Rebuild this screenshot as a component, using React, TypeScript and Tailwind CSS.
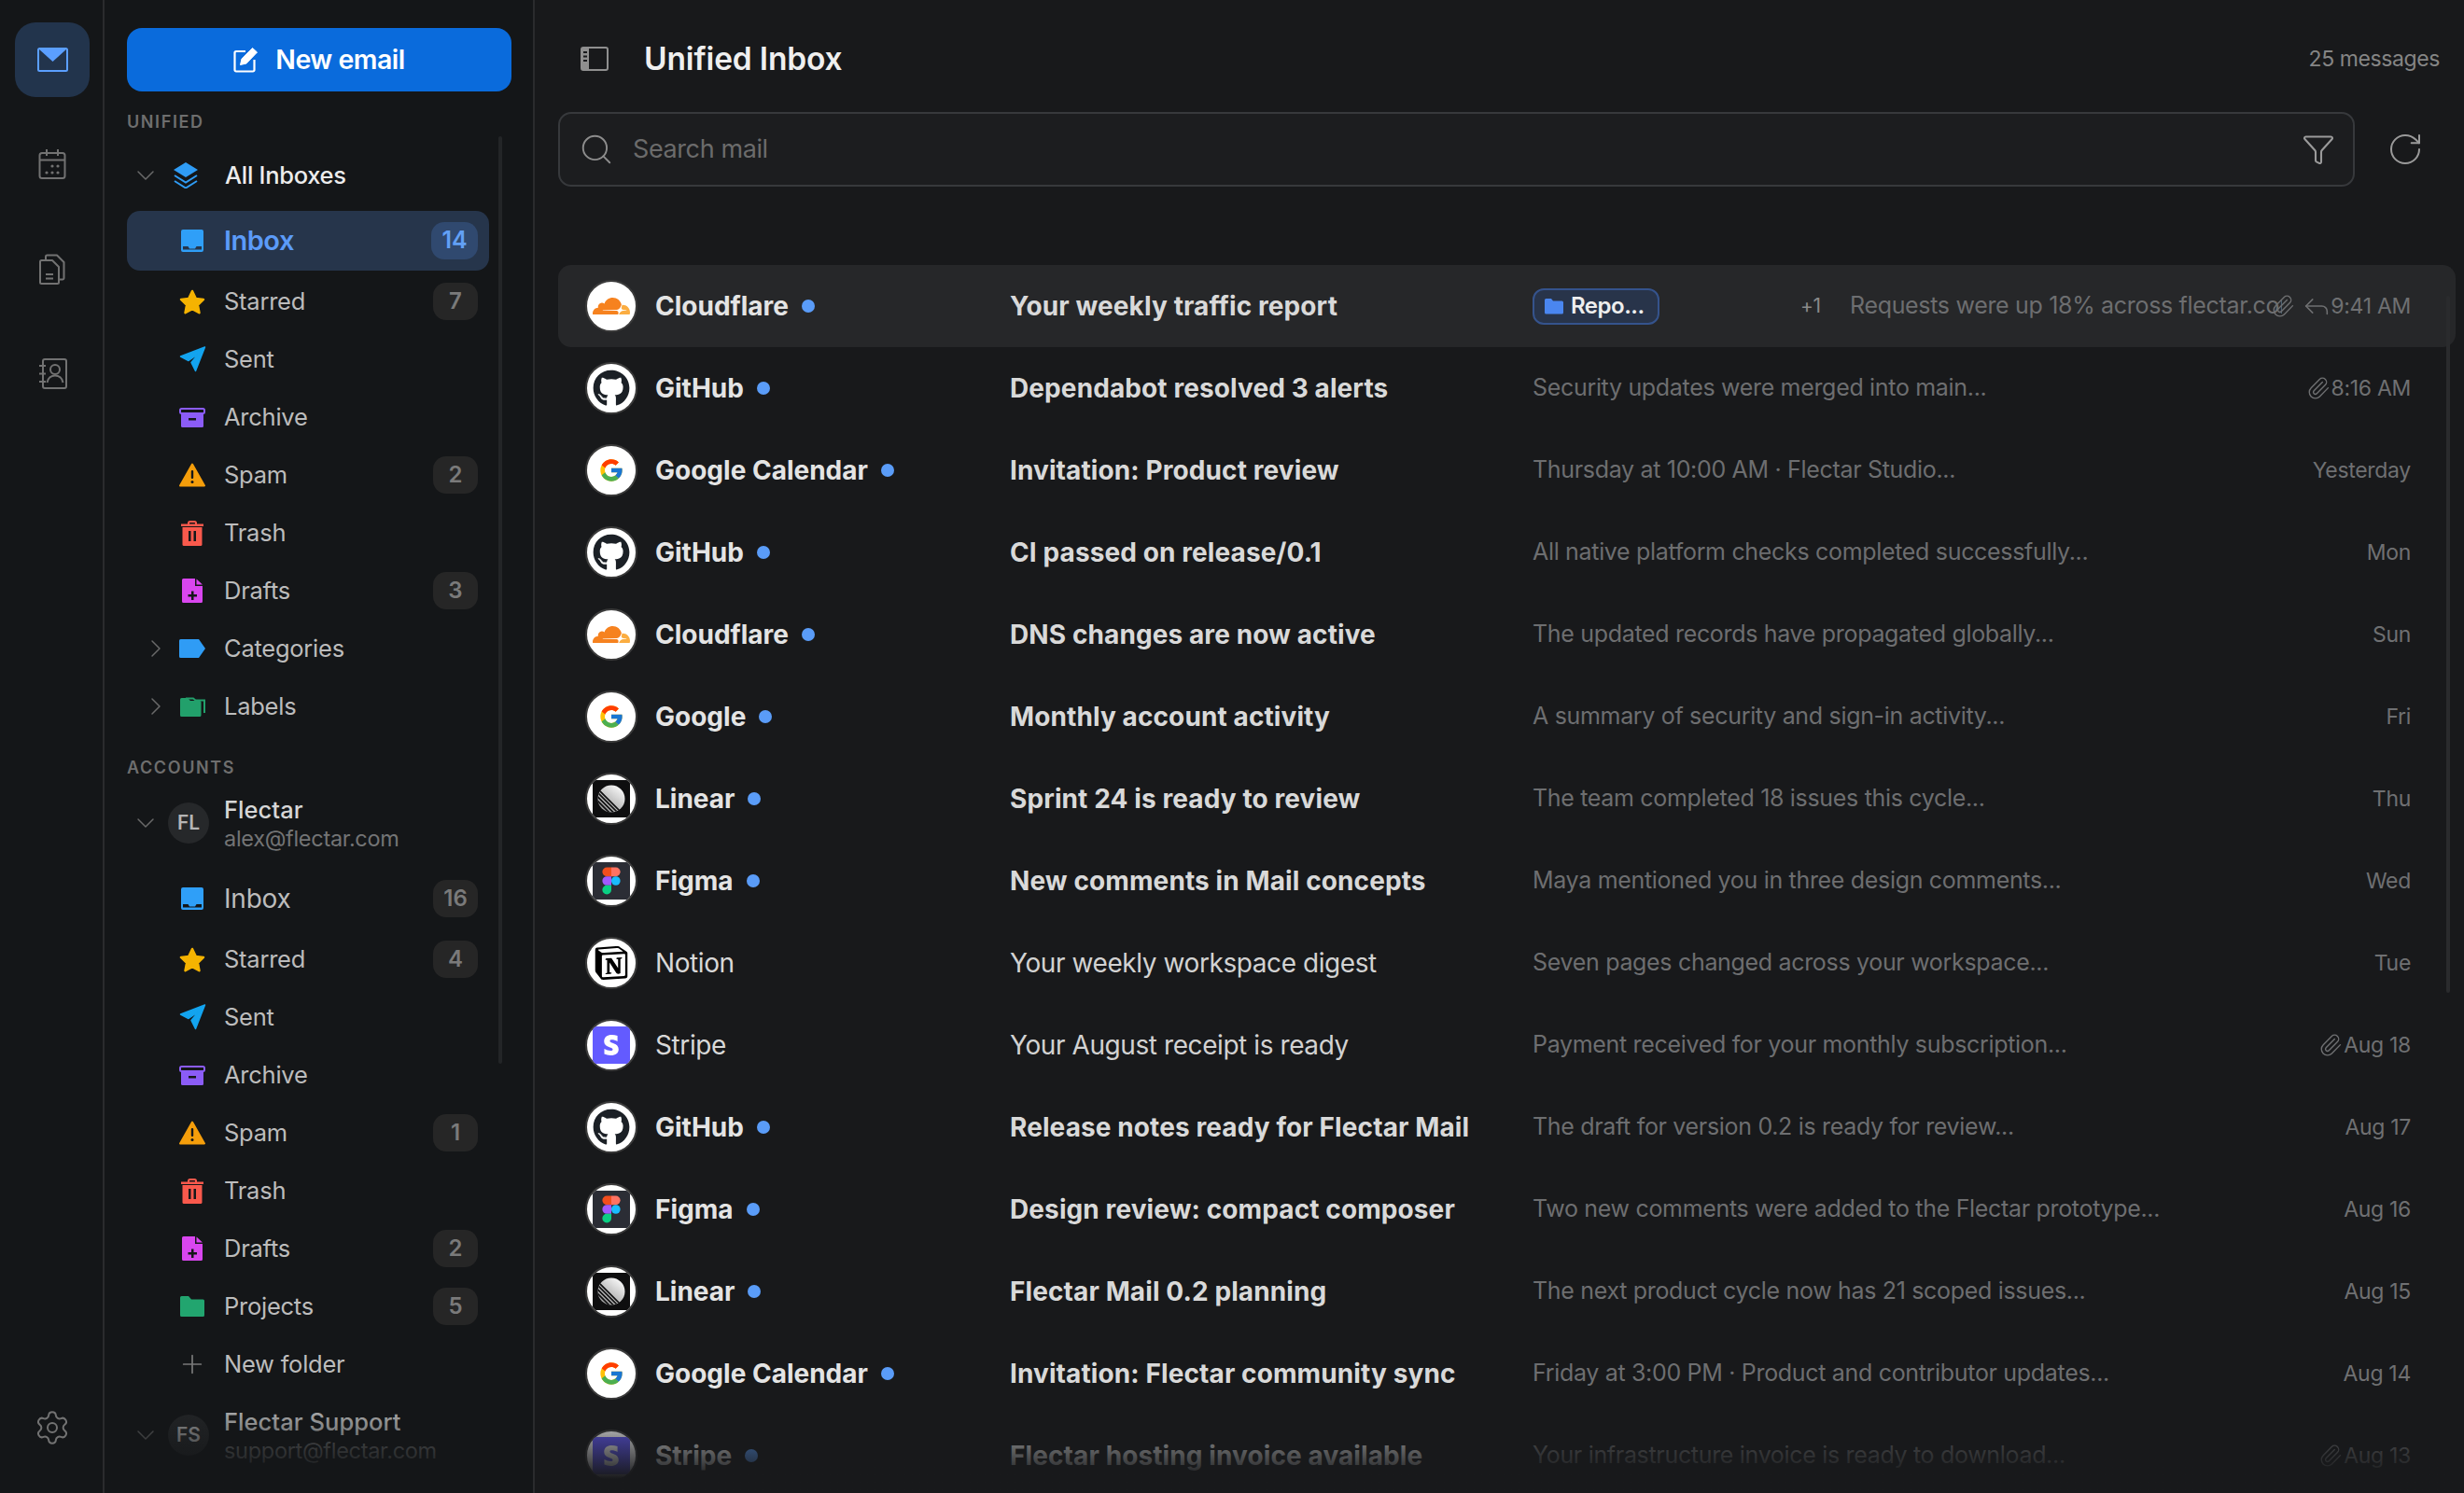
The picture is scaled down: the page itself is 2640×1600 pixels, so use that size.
import React from "react";
import { Settings, ChevronDown, ChevronRight, Plus, Search, Funnel, RotateCw, Paperclip, Reply } from "lucide-react";
import { FaGithub, FaStripeS } from "react-icons/fa";
import { FcGoogle } from "react-icons/fc";
import { SiNotion } from "react-icons/si";

const I = {
  mail: (
    <svg width="33" height="26" viewBox="0 0 33 26"><rect x="1" y="1" width="31" height="24" rx="1.5" fill="none" stroke="#5b9fff" strokeWidth="2" /><path d="M1 1h31L16.5 15z" fill="#5b9fff" /></svg>
  ),
  calendar: (
    <svg width="30" height="32" viewBox="0 0 30 32" fill="none" stroke="#727272" strokeWidth="2"><rect x="1.500" y="4" width="27" height="27" rx="2.500" /><path d="M9 0v7M21 0v7M1.500 11.500h27" /><g fill="#727272" stroke="none"><circle cx="15" cy="18" r="1.600" /><circle cx="21" cy="18" r="1.600" /><circle cx="9" cy="25" r="1.600" /><circle cx="15" cy="25" r="1.600" /><circle cx="21" cy="25" r="1.600" /></g></svg>
  ),
  files: (
    <svg width="28" height="33" viewBox="0 0 28 33" fill="none" stroke="#727272" strokeWidth="2" strokeLinejoin="round"><path d="M1 8.500A1.500 1.500 0 0 1 2.500 7H14l7 7v16.500a1.500 1.500 0 0 1-1.500 1.500h-17A1.500 1.500 0 0 1 1 30.500z" /><path d="M7 22h8M7 26.500h8" /><path d="M7 7V3A1.500 1.500 0 0 1 8.500 1.500H19l7.500 7.500v17a1.500 1.500 0 0 1-1.500 1.500h-4" /></svg>
  ),
  contacts: (
    <svg width="31" height="33" viewBox="0 0 31 33" fill="none" stroke="#727272" strokeWidth="2"><rect x="5" y="1" width="25" height="31" rx="2" /><path d="M1 8h7M1 16.500h7M1 25h7" /><circle cx="18" cy="12" r="5" /><path d="M9.500 26c.8-5 4.500-7.500 8.500-7.500s7.700 2.500 8.500 7.500" /></svg>
  ),
  compose: (
    <svg width="27" height="28" viewBox="0 0 27 28" fill="none"><path d="M13 5H3A1.500 1.500 0 0 0 1.500 6.500V25A1.500 1.500 0 0 0 3 26.500h18a1.500 1.500 0 0 0 1.500-1.500V14" stroke="#fff" strokeWidth="2.200" /><path d="M20.500 1.500l5 4.500L14 18l-6.500 1.500L9 13z" fill="#fff" stroke="#fff" strokeLinejoin="round" /></svg>
  ),
  layers: (
    <svg width="26" height="28" viewBox="0 0 26 28" fill="none"><path d="M13 0l13 8-13 8L0 8z" fill="#2f9cf5" /><path d="M1 14l12 7.500L25 14M1 20l12 7.500L25 20" stroke="#2f9cf5" strokeWidth="2" /></svg>
  ),
  inbox: (
    <svg width="24" height="24" viewBox="0 0 24 24"><path fillRule="evenodd" d="M2 0h20a2 2 0 0 1 2 2v20a2 2 0 0 1-2 2H2a2 2 0 0 1-2-2V2a2 2 0 0 1 2-2zM2 18v3.500h20V18h-5.500l-1.500 2.500H9L7.500 18z" fill="#2f9ff8" /></svg>
  ),
  star: (
    <svg width="28" height="27" viewBox="0 0 28 27"><path d="M14 2l3.700 7.900 8.300 1-6.100 5.900 1.600 8.400L14 21.100l-7.500 4.100 1.600-8.400L2 10.900l8.300-1z" fill="#f5b301" stroke="#f5b301" strokeWidth="2.500" strokeLinejoin="round" /></svg>
  ),
  sent: (
    <svg width="29" height="28" viewBox="0 0 29 28"><path d="M27.500 1L1.500 11l8.500 4.500L21 8l-8 9.500 4.500 9z" fill="#13a4ef" stroke="#13a4ef" strokeWidth="1.500" strokeLinejoin="round" /></svg>
  ),
  archive: (
    <svg width="28" height="21" viewBox="0 0 28 21" fill="none"><rect x="1" y="1" width="26" height="5" rx="1.500" stroke="#8b5cf6" strokeWidth="2" /><path d="M2 7h24v12.500a1.500 1.500 0 0 1-1.500 1.500h-21A1.500 1.500 0 0 1 2 19.500z" fill="#8b5cf6" /><rect x="10" y="11" width="8" height="2.500" fill="#15171a" /></svg>
  ),
  spam: (
    <svg width="28" height="26" viewBox="0 0 28 26"><path d="M14 1.500L27 24.500H1z" fill="#f59e0b" stroke="#f59e0b" strokeWidth="2" strokeLinejoin="round" /><rect x="12.800" y="8" width="2.400" height="9" rx="1" fill="#15171a" /><circle cx="14" cy="20.500" r="1.500" fill="#15171a" /></svg>
  ),
  trash: (
    <svg width="24" height="27" viewBox="0 0 24 27" fill="none"><path d="M8 4V2.500A1.500 1.500 0 0 1 9.500 1h5A1.500 1.500 0 0 1 16 2.500V4" stroke="#f9594c" strokeWidth="2" /><rect y="3.500" width="24" height="2.500" fill="#f9594c" /><path d="M1.500 7h21v18.500a1.500 1.500 0 0 1-1.500 1.500H3a1.500 1.500 0 0 1-1.500-1.500z" fill="#f9594c" /><rect x="8" y="11" width="2.500" height="11" fill="#15171a" /><rect x="13.500" y="11" width="2.500" height="11" fill="#15171a" /></svg>
  ),
  drafts: (
    <svg width="22" height="26" viewBox="0 0 22 26"><path d="M1.500 0H14v8h8v16.500a1.500 1.500 0 0 1-1.500 1.500h-19A1.500 1.500 0 0 1 0 24.500v-23A1.500 1.500 0 0 1 1.500 0z" fill="#d946ef" /><path d="M15.500 0.500L22 6.500h-6.500z" fill="#d946ef" /><path d="M10 13.500h2.500v3.500H16v2.500h-3.500V23H10v-3.500H6.500V17H10z" fill="#15171a" /></svg>
  ),
  tag: (
    <svg width="28" height="20" viewBox="0 0 28 20"><path d="M1.500 0H21l7 10-7 10H1.500A1.500 1.500 0 0 1 0 18.500v-17A1.500 1.500 0 0 1 1.500 0z" fill="#2f9cf5" /></svg>
  ),
  labels: (
    <svg width="27" height="22" viewBox="0 0 27 22" fill="none"><path d="M6 2.500h8l2.500 2H26V18" stroke="#22a06b" strokeWidth="2" /><path d="M1.500 2H8l3 3h10a1.500 1.500 0 0 1 1.500 1.500v14a1.500 1.500 0 0 1-1.500 1.500H1.500A1.500 1.500 0 0 1 0 20.500v-17A1.500 1.500 0 0 1 1.500 2z" fill="#22a06b" /></svg>
  ),
  folder: (
    <svg width="26" height="22" viewBox="0 0 26 22"><path d="M1.500 0H9l3 3.500h12.500A1.500 1.500 0 0 1 26 5v15.500a1.500 1.500 0 0 1-1.500 1.500h-23A1.500 1.500 0 0 1 0 20.500v-19A1.500 1.500 0 0 1 1.500 0z" fill="#22a56f" /></svg>
  ),
  panel: (
    <svg width="30" height="26" viewBox="0 0 30 26" fill="none"><rect x="1" y="1" width="28" height="24" rx="2" stroke="#8f8f8f" strokeWidth="2" /><path d="M1 3a2 2 0 0 1 2-2h6v24H3a2 2 0 0 1-2-2z" fill="#8f8f8f" /><rect x="3" y="5" width="4" height="2" fill="#191a1c" /><rect x="3" y="9.500" width="4" height="2" fill="#191a1c" /><rect x="3" y="14" width="4" height="2" fill="#191a1c" /></svg>
  ),
  chipFolder: (
    <svg width="20" height="18" viewBox="0 0 20 18"><path d="M1.500 1H7l2 2.500h9.500A1.500 1.500 0 0 1 20 5v11a1.500 1.500 0 0 1-1.500 1.500h-17A1.500 1.500 0 0 1 0 16V2.500A1.500 1.500 0 0 1 1.500 1z" fill="#4a86f0" /></svg>
  ),
};

function Cloudflare() {
  return (
    <svg width="40" height="40" viewBox="0 0 24 24">
      <path fill="#f6821f" d="M16.5088 16.8447c.1475-.5068.0908-.9707-.1553-1.3154-.2246-.3164-.6045-.499-1.0615-.5205l-8.6592-.1123a.1559.1559 0 0 1-.1333-.0713c-.0283-.042-.0351-.0986-.021-.1553.0278-.084.1123-.1484.2036-.1562l8.7359-.1123c1.0351-.0489 2.1601-.8868 2.5537-1.9136l.499-1.3013c.0215-.0561.0293-.1128.0147-.168-.5625-2.5463-2.835-4.4453-5.5499-4.4453-2.5039 0-4.6284 1.6177-5.3876 3.8614-.4927-.3658-1.1187-.5625-1.794-.499-1.2026.119-2.1665 1.083-2.2861 2.2856-.0283.31-.0069.6128.0635.894C1.5683 13.171 0 14.7754 0 16.7559c0 .1748.0142.3515.0352.5273.0141.083.0844.1475.1689.1475h15.9814c.0909 0 .1758-.0645.2032-.1553l.12-.4307z" />
      <path fill="#fbad41" d="M19.2656 11.2813c-.0771 0-.1611 0-.2383.0112-.0566 0-.1054.0415-.127.0976l-.3378 1.1744c-.1475.5068-.0918.9707.1543 1.3164.2256.3164.6055.498 1.0625.5195l1.8437.1133c.0557 0 .1055.0263.1329.0703.0283.043.0351.1074.0214.1562-.0283.084-.1132.1485-.204.1553l-1.921.1123c-1.041.0488-2.1582.8867-2.5527 1.914l-.1406.3585c-.0283.0713.0215.1416.0986.1416h6.5977c.0771 0 .1474-.0489.169-.126.1122-.4082.1757-.837.1757-1.2803 0-2.6025-2.125-4.727-4.7344-4.727" />
    </svg>
  );
}
function Linear() {
  return (
    <svg width="40" height="40" viewBox="0 0 40 40">
      <defs>
        <linearGradient id="lg" x1="0.8" y1="0.1" x2="0.2" y2="0.9"><stop offset="0" stopColor="#f4f4f4" /><stop offset="1" stopColor="#9a9a9a" /></linearGradient>
        <clipPath id="lc"><circle cx="20" cy="20" r="14.500" /></clipPath>
      </defs>
      <rect width="40" height="40" fill="#0e0e0f" />
      <circle cx="20" cy="20" r="14.500" fill="url(#lg)" />
      <g clipPath="url(#lc)" stroke="#0e0e0f" strokeWidth="1.600">
        <path d="M3 11l26 26M3 15.500l22 22M3 20l18 18M3 7l30 30" />
      </g>
    </svg>
  );
}
function Figma() {
  return (
    <svg width="40" height="40" viewBox="0 0 40 40">
      <rect width="40" height="40" fill="#2b2d35" />
      <path d="M20 5.500h-4.800a4.830 4.830 0 0 0 0 9.670H20z" fill="#f24e1e" />
      <path d="M20 5.500h4.800a4.830 4.830 0 0 1 0 9.670H20z" fill="#ff7262" />
      <path d="M20 15.170h-4.800a4.830 4.830 0 0 0 0 9.670H20z" fill="#a259ff" />
      <circle cx="24.800" cy="20" r="4.830" fill="#1abcfe" />
      <path d="M15.200 24.830H20v4.830a4.830 4.830 0 1 1-4.800-4.830z" fill="#0acf83" />
    </svg>
  );
}

const logos: Record<string, React.ReactNode> = {
  Cloudflare: <Cloudflare />,
  GitHub: <FaGithub size={40} color="#1b2026" />,
  Google: <FcGoogle size={28} />,
  Linear: <Linear />,
  Figma: <Figma />,
  Notion: <SiNotion size={36} color="#000" />,
  Stripe: (
    <span className="flex h-[40px] w-[40px] items-center justify-center bg-[#635bff]">
      <FaStripeS size={22} color="#fff" />
    </span>
  ),
};

type Mail = { s: string; logo: string; subj: string; prev: string; time: string; unread?: boolean; clip?: boolean };
const mails: Mail[] = [
  { s: "Cloudflare", logo: "Cloudflare", subj: "Your weekly traffic report", prev: "Requests were up 18% across flectar.com properties this week...", time: "9:41 AM", unread: true },
  { s: "GitHub", logo: "GitHub", subj: "Dependabot resolved 3 alerts", prev: "Security updates were merged into main...", time: "8:16 AM", unread: true, clip: true },
  { s: "Google Calendar", logo: "Google", subj: "Invitation: Product review", prev: "Thursday at 10:00 AM · Flectar Studio...", time: "Yesterday", unread: true },
  { s: "GitHub", logo: "GitHub", subj: "CI passed on release/0.1", prev: "All native platform checks completed successfully...", time: "Mon", unread: true },
  { s: "Cloudflare", logo: "Cloudflare", subj: "DNS changes are now active", prev: "The updated records have propagated globally...", time: "Sun", unread: true },
  { s: "Google", logo: "Google", subj: "Monthly account activity", prev: "A summary of security and sign-in activity...", time: "Fri", unread: true },
  { s: "Linear", logo: "Linear", subj: "Sprint 24 is ready to review", prev: "The team completed 18 issues this cycle...", time: "Thu", unread: true },
  { s: "Figma", logo: "Figma", subj: "New comments in Mail concepts", prev: "Maya mentioned you in three design comments...", time: "Wed", unread: true },
  { s: "Notion", logo: "Notion", subj: "Your weekly workspace digest", prev: "Seven pages changed across your workspace...", time: "Tue" },
  { s: "Stripe", logo: "Stripe", subj: "Your August receipt is ready", prev: "Payment received for your monthly subscription...", time: "Aug 18", clip: true },
  { s: "GitHub", logo: "GitHub", subj: "Release notes ready for Flectar Mail", prev: "The draft for version 0.2 is ready for review...", time: "Aug 17", unread: true },
  { s: "Figma", logo: "Figma", subj: "Design review: compact composer", prev: "Two new comments were added to the Flectar prototype...", time: "Aug 16", unread: true },
  { s: "Linear", logo: "Linear", subj: "Flectar Mail 0.2 planning", prev: "The next product cycle now has 21 scoped issues...", time: "Aug 15", unread: true },
  { s: "Google Calendar", logo: "Google", subj: "Invitation: Flectar community sync", prev: "Friday at 3:00 PM · Product and contributor updates...", time: "Aug 14", unread: true },
  { s: "Stripe", logo: "Stripe", subj: "Flectar hosting invoice available", prev: "Your infrastructure invoice is ready to download...", time: "Aug 13", unread: true, clip: true },
];

function Badge({ n, active }: { n: number; active?: boolean }) {
  return active ? (
    <span className="mr-[12px] ml-auto flex h-[40px] w-[50px] items-center justify-center rounded-[14px] bg-[#30496f] text-[25px] font-semibold text-[#62a0f5]">{n}</span>
  ) : (
    <span className="mr-[12px] ml-auto flex h-[40px] w-[48px] items-center justify-center rounded-[14px] bg-[#262626] text-[24px] font-semibold text-[#7a7a7a]">{n}</span>
  );
}

function NavRow({ icon, label, n, chevron, mt }: { icon: React.ReactNode; label: string; n?: number; chevron?: boolean; mt?: boolean }) {
  return (
    <div className={mt ? "mt-[2px] flex h-[62px] items-center" : "flex h-[62px] items-center"}>
      <span className="flex w-[52px] pl-[15px]">{chevron && <ChevronRight size={32} strokeWidth={1.100} color="#6a6a6a" />}</span>
      <span className="flex w-[36px] justify-center">{icon}</span>
      <span className="ml-[16px] text-[25.500px] tracking-[-0.25px] text-[#bcbcbc]">{label}</span>
      {n !== undefined && <Badge n={n} />}
    </div>
  );
}

function Account({ ini, name, mail, mt }: { ini: string; name: string; mail: string; mt: string }) {
  return (
    <div className={`flex h-[62px] items-center ${mt}`}>
      <span className="flex w-[44px] pl-[4px]"><ChevronDown size={32} strokeWidth={1.100} color="#6a6a6a" /></span>
      <span className="flex h-[44px] w-[44px] items-center justify-center rounded-full bg-[#26282a] text-[21px] font-semibold text-[#b5b5b5]">{ini}</span>
      <span className="mt-[2px] ml-[16px] flex flex-col">
        <span className="text-[25.500px] leading-[31px] font-medium tracking-[0.05px] text-[#d6d6d6]">{name}</span>
        <span className="text-[23.500px] leading-[31px] tracking-[-0.3px] text-[#737475]">{mail}</span>
      </span>
    </div>
  );
}

function SectionLabel({ children, mt }: { children: string; mt: string }) {
  return <div className={`h-[20px] text-[18px] leading-[20px] font-semibold tracking-[1.600px] text-[#6e6e6e] ${mt}`}>{children}</div>;
}

function Sidebar() {
  return (
    <aside className="relative h-full w-[461px] shrink-0 overflow-hidden border-r-2 border-[#2a2b2d] pl-[24px]">
      <button className="mt-[30px] flex h-[68px] w-[412px] items-center justify-center gap-[18px] rounded-[16px] bg-[#0a6bdc] text-[28.500px] font-semibold tracking-[-0.5px] text-white">
        {I.compose}
        <span>New email</span>
      </button>
      <SectionLabel mt="mt-[23px]">UNIFIED</SectionLabel>
      <div className="w-[388px]">
        <div className="mt-[16px] flex h-[62px] items-center">
          <span className="flex w-[45px] pl-[4px]"><ChevronDown size={32} strokeWidth={1.100} color="#6a6a6a" /></span>
          <span className="flex w-[36px] justify-center">{I.layers}</span>
          <span className="ml-[24px] text-[25.500px] font-medium tracking-[-0.3px] text-[#ececec]">All Inboxes</span>
        </div>
        <div className="mt-[7px] flex h-[64px] items-center rounded-[14px] bg-[#26354b]">
          <span className="w-[52px]" />
          <span className="flex w-[36px] justify-center">{I.inbox}</span>
          <span className="ml-[16px] text-[29px] font-semibold tracking-[-0.5px] text-[#5b9bf8]">Inbox</span>
          <Badge n={14} active />
        </div>
        <NavRow mt icon={I.star} label="Starred" n={7} />
        <NavRow icon={I.sent} label="Sent" />
        <NavRow icon={I.archive} label="Archive" />
        <NavRow icon={I.spam} label="Spam" n={2} />
        <NavRow icon={I.trash} label="Trash" />
        <NavRow icon={I.drafts} label="Drafts" n={3} />
        <NavRow icon={I.tag} label="Categories" chevron />
        <NavRow icon={I.labels} label="Labels" chevron />
      </div>
      <SectionLabel mt="mt-[25px]">ACCOUNTS</SectionLabel>
      <div className="w-[388px]">
        <Account ini="FL" name="Flectar" mail="alex@flectar.com" mt="mt-[18px]" />
        <div className="mt-[18px] mb-[1px] flex h-[64px] items-center">
          <span className="w-[52px]" />
          <span className="flex w-[36px] justify-center">{I.inbox}</span>
          <span className="ml-[16px] text-[28px] tracking-[-0.2px] text-[#bcbcbc]">Inbox</span>
          <Badge n={16} />
        </div>
        <NavRow mt icon={I.star} label="Starred" n={4} />
        <NavRow icon={I.sent} label="Sent" />
        <NavRow icon={I.archive} label="Archive" />
        <NavRow icon={I.spam} label="Spam" n={1} />
        <NavRow icon={I.trash} label="Trash" />
        <NavRow icon={I.drafts} label="Drafts" n={2} />
        <NavRow icon={I.folder} label="Projects" n={5} />
        <NavRow icon={<Plus size={32} strokeWidth={1.300} color="#787878" />} label="New folder" />
        <Account ini="FS" name="Flectar Support" mail="support@flectar.com" mt="mt-[14px]" />
      </div>
      <div className="absolute top-[146px] right-[33px] h-[994px] w-[4px] rounded-full bg-[#232527]" />
      <div className="absolute right-0 bottom-0 left-0 h-[110px] bg-gradient-to-b from-transparent to-[#141618] to-85%" />
    </aside>
  );
}

function MailRow({ m, first }: { m: Mail; first?: boolean }) {
  const bold = m.unread;
  return (
    <div className={first ? "flex h-[88px] items-center rounded-[14px] bg-[#262729]" : "flex h-[88px] items-center"}>
      <span className="ml-[29px] flex h-[56px] w-[56px] shrink-0 items-center justify-center overflow-hidden rounded-full border-2 border-[#3b3b3b] bg-white">{logos[m.logo]}</span>
      <span className="ml-[19px] flex w-[380px] shrink-0 items-center gap-[14px]">
        <span className={bold ? "text-[28px] font-bold tracking-[0px] text-[#e4e4e4]" : "text-[28px] tracking-[-0.4px] text-[#d8d8d8]"}>{m.s}</span>
        {m.unread && <span className="h-[14px] w-[14px] rounded-full bg-[#5a9cf8]" />}
      </span>
      <span className={bold ? "w-[560px] shrink-0 text-[28px] font-bold tracking-[0.1px] text-[#d9d9d9]" : "w-[560px] shrink-0 text-[28px] tracking-[-0.42px] text-[#d2d2d2]"}>{m.subj}</span>
      <div className="flex min-w-0 flex-1 items-center overflow-hidden text-[25px] tracking-[-0.32px] whitespace-nowrap text-[#6d6e70]">
        {first && (
          <>
            <span className="flex h-[39px] w-[136px] shrink-0 items-center gap-[8px] rounded-[12px] border-2 border-[#35538c] bg-[#28344a] pl-[11px] text-[24px] font-semibold tracking-[-0.5px] text-[#eeeeee]">
              {I.chipFolder}
              <span>Repo...</span>
            </span>
            <span className="ml-[151px] w-[53px] shrink-0 text-[21px] text-[#8a8a8a]">+1</span>
          </>
        )}
        <span>{m.prev}</span>
      </div>
      <div className="mr-[48px] flex shrink-0 items-center justify-end text-[23px] tracking-[-0.3px] text-[#6f7072]">
        {first && (
          <>
            <Paperclip size={26} strokeWidth={1.300} color="#6f7072" className="-ml-[12px]" />
            <Reply size={34} strokeWidth={1.100} color="#6f7072" className="-mr-[2px] ml-[6px]" />
          </>
        )}
        {m.clip && <Paperclip size={26} strokeWidth={1.300} color="#6f7072" className="mr-[1px]" />}
        <span>{m.time}</span>
      </div>
    </div>
  );
}

function Main() {
  return (
    <main className="relative flex h-full min-w-0 flex-1 flex-col overflow-hidden bg-[#18191b]">
      <header className="flex h-[120px] shrink-0 items-center pt-[6px] pr-[26px] pl-[49px]">
        {I.panel}
        <h1 className="ml-[38px] text-[33.500px] font-semibold tracking-[-0.15px] text-[#efefef]">Unified Inbox</h1>
        <span className="ml-auto text-[23px] tracking-[-0.4px] text-[#858585]">25 messages</span>
      </header>
      <div className="flex shrink-0 items-center pl-[25px]">
        <div className="flex h-[80px] w-[1925px] items-center rounded-[14px] border-2 border-[#37393c] bg-[#1c1d1f] pr-[19px] pl-[20px]">
          <Search size={38} strokeWidth={1.200} color="#8d8d8d" />
          <span className="ml-[20px] text-[27px] tracking-[-0.4px] text-[#6b6b6b]">Search mail</span>
          <Funnel size={36} strokeWidth={1.400} color="#9a9a9a" className="ml-auto" />
        </div>
        <RotateCw size={40} strokeWidth={1.200} color="#9a9a9a" className="ml-[34px]" />
      </div>
      <div className="mt-[84px] pr-[9px] pl-[25px]">
        {mails.map((m, i) => (
          <MailRow key={i} m={m} first={i === 0} />
        ))}
      </div>
      <div className="absolute top-[317px] right-[15px] h-[747px] w-[4px] rounded-full bg-[#2a2b2d]" />
      <div className="absolute right-0 bottom-0 left-0 h-[100px] bg-gradient-to-b from-transparent to-[#18191b] to-85%" />
    </main>
  );
}

export default function App() {
  return (
    <div className="flex h-[1600px] w-[2640px] overflow-hidden bg-[#141618] font-['Inter','Liberation_Sans',sans-serif]">
      <nav className="flex h-full w-[112px] shrink-0 flex-col items-start gap-[32px] border-r-2 border-[#2a2b2d] pt-[24px] pb-[30px] pl-[16px]">
        <span className="flex h-[80px] w-[80px] items-center justify-center rounded-[22px] bg-[#22344c]">{I.mail}</span>
        <span className="flex h-[80px] w-[80px] items-center justify-center">{I.calendar}</span>
        <span className="flex h-[80px] w-[80px] items-center justify-center">{I.files}</span>
        <span className="flex h-[80px] w-[80px] items-center justify-center">{I.contacts}</span>
        <span className="mt-auto flex h-[80px] w-[80px] items-center justify-center"><Settings size={40} strokeWidth={1.200} color="#727272" /></span>
      </nav>
      <Sidebar />
      <Main />
    </div>
  );
}
